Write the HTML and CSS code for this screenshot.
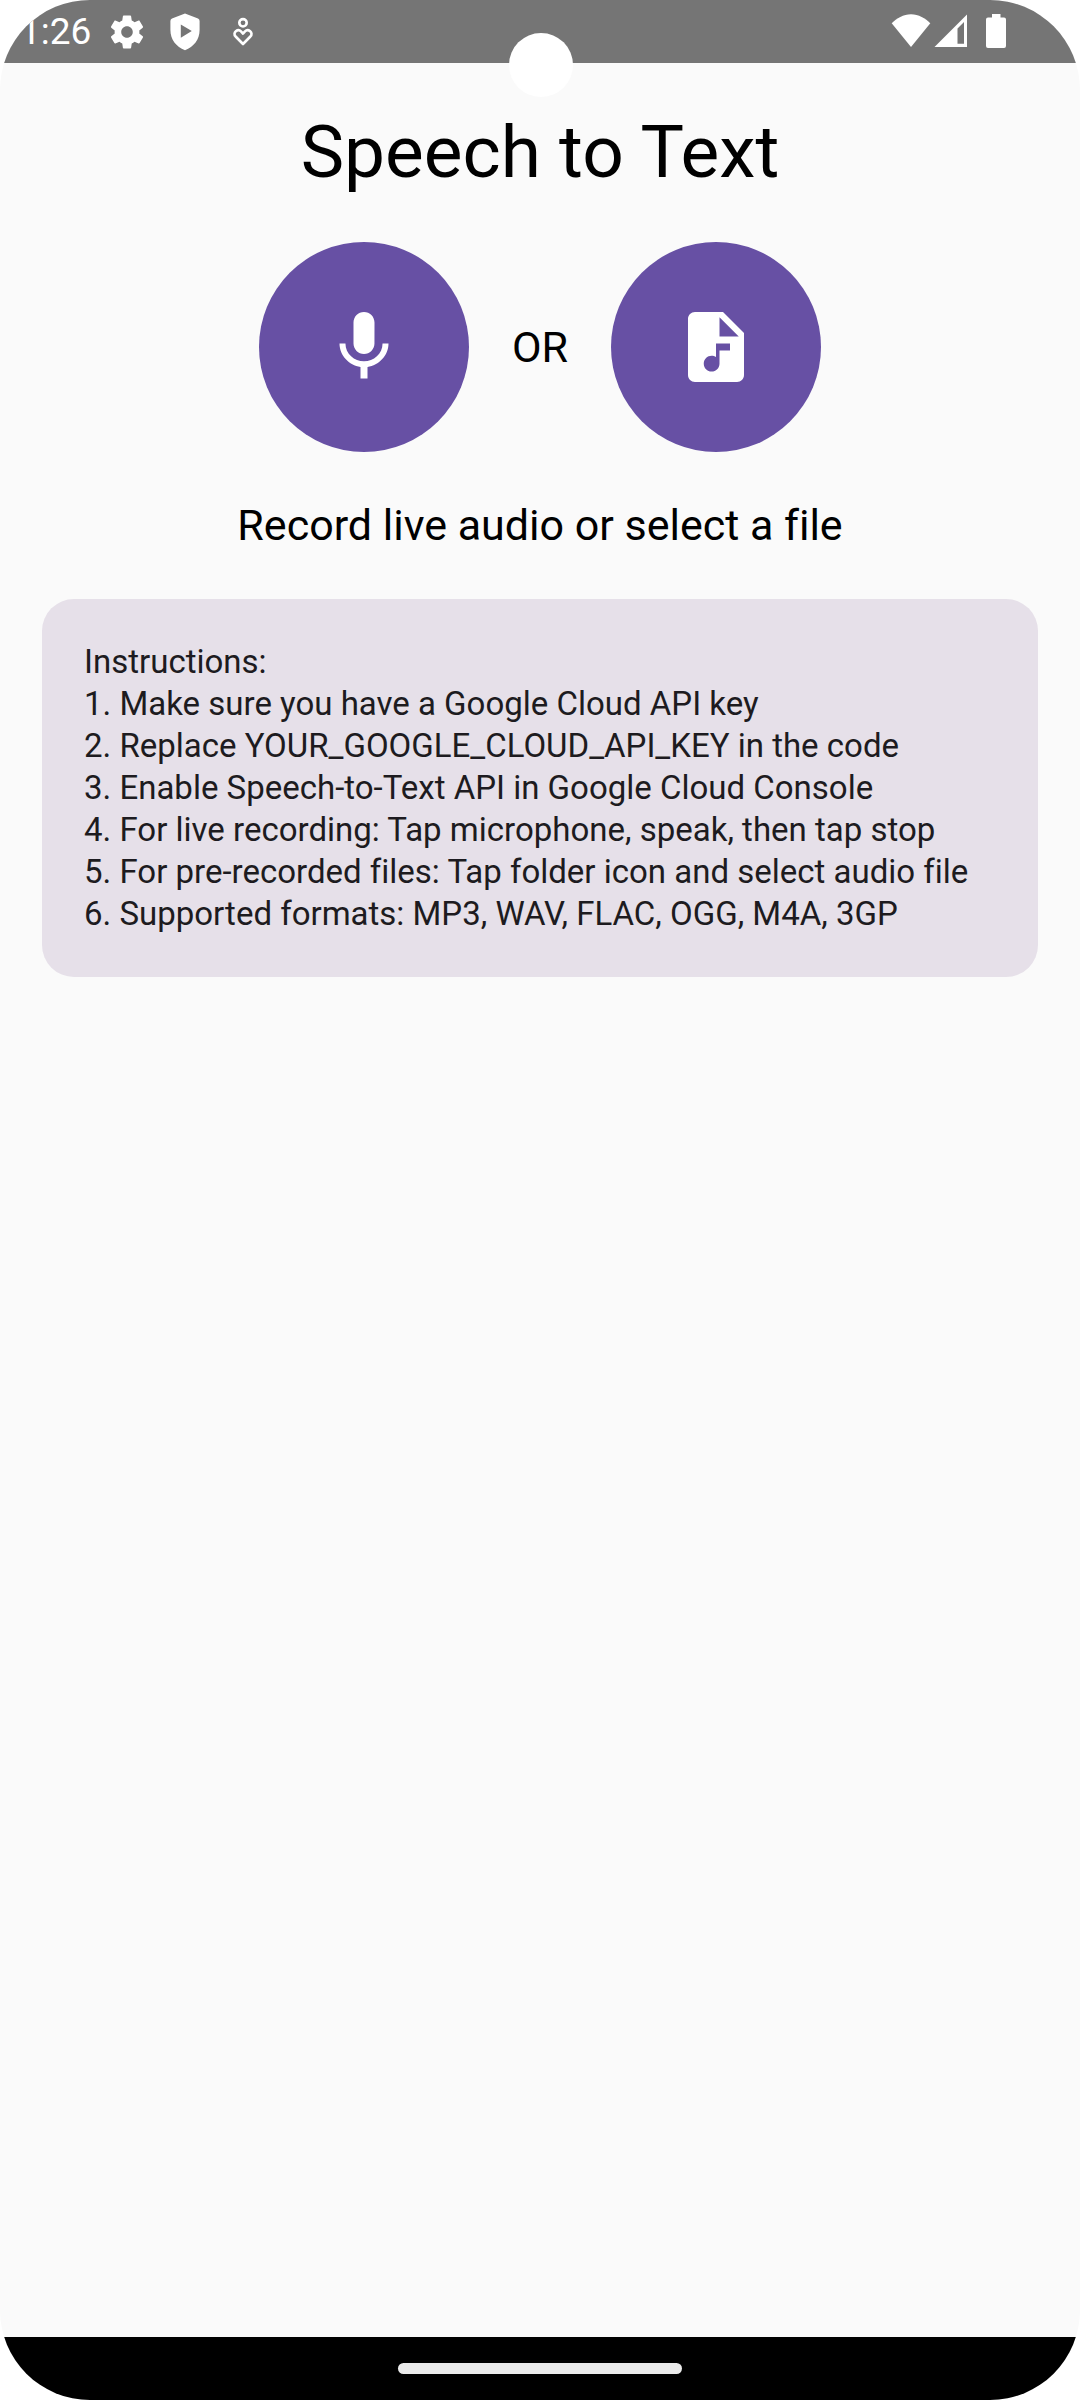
FILE: index.html
```html
<!DOCTYPE html>
<html lang="en">
<head>
  <meta charset="utf-8">
  <meta name="viewport" content="width=device-width, initial-scale=1">
  <title>Speech to Text</title>
  <link rel="stylesheet" href="styles.css">
</head>
<body>
  <div class="screen">
    <header class="status-bar">
      <div class="status-group">
        <time class="clock">1:26</time>
        <div class="notifications">
          <svg class="status-icon" viewBox="0 0 40 40" aria-hidden="true">
            <path transform="translate(.2 .2) scale(1.65)" d="M19.43 12.98c.04-.32.07-.64.07-.98s-.03-.66-.07-.98l2.11-1.65c.19-.15.24-.42.12-.64l-2-3.46c-.12-.22-.39-.3-.61-.22l-2.49 1c-.52-.4-1.08-.73-1.69-.98l-.38-2.65C14.46 2.18 14.25 2 14 2h-4c-.25 0-.46.18-.49.42l-.38 2.65c-.61.25-1.17.59-1.69.98l-2.49-1c-.23-.09-.49 0-.61.22l-2 3.46c-.13.22-.07.49.12.64l2.11 1.65c-.04.32-.07.65-.07.98s.03.66.07.98l-2.11 1.65c-.19.15-.24.42-.12.64l2 3.46c.12.22.39.3.61.22l2.49-1c.52.4 1.08.73 1.69.98l.38 2.65c.03.24.24.42.49.42h4c.25 0 .46-.18.49-.42l.38-2.65c.61-.25 1.17-.59 1.69-.98l2.49 1c.23.09.49 0 .61-.22l2-3.46c.12-.22.07-.49-.12-.64l-2.11-1.65zM12 15.5c-1.93 0-3.5-1.57-3.5-3.5s1.57-3.5 3.5-3.5 3.5 1.57 3.5 3.5-1.57 3.5-3.5 3.5z"/>
          </svg>
          <svg class="status-icon" viewBox="0 0 40 40" aria-hidden="true">
            <path fill-rule="evenodd" d="M20 1.600 33 6.600Q34.600 7.300 34.600 9V18C34.600 27.500 28.800 34.800 20 38.200 11.200 34.800 5.400 27.500 5.400 18V9Q5.400 7.300 7 6.600ZM15.800 12.500V25.700L26.800 19.100Z"/>
          </svg>
          <svg class="status-icon" viewBox="0 0 40 40" aria-hidden="true">
            <g fill="none" stroke="#fff" stroke-width="2.600">
              <circle cx="20" cy="10.800" r="3.700"/>
              <path stroke-linejoin="round" d="M20 32 12.600 24.500C9 20.500 15 16.400 18 19.400L20 21.600 22 19.400C25 16.400 31 20.500 27.400 24.500Z"/>
            </g>
          </svg>
        </div>
      </div>
      <div class="status-group status-group-end">
        <svg class="status-icon" viewBox="0 0 40 40" aria-hidden="true">
          <path d="M20 35 .7 11.200C5.500 6.400 12.500 2.200 20 2.200S34.500 6.400 39.300 11.200Z"/>
        </svg>
        <svg class="status-icon" viewBox="0 0 40 40" aria-hidden="true">
          <path fill-rule="evenodd" d="M3.500 35 36 2.500V35ZM26.500 16.500V31.700H33V9.900Z"/>
        </svg>
        <svg class="battery" viewBox="0 0 22 40" aria-hidden="true">
          <path d="M7 2h8.500v3.500H19Q21 5.500 21 7.500V34Q21 36 19 36H3Q1 36 1 34V7.500Q1 5.500 3 5.500H7Z"/>
        </svg>
      </div>
      <span class="camera"></span>
    </header>

    <main class="content">
      <h1 class="title">Speech to Text</h1>
      <div class="actions">
        <button class="action-button" type="button" aria-label="Record live audio">
          <svg class="action-icon" viewBox="0 0 24 24" aria-hidden="true">
            <path d="M12 14c1.660 0 2.990-1.340 2.990-3L15 5c0-1.660-1.340-3-3-3S9 3.340 9 5v6c0 1.660 1.340 3 3 3zM17.300 11c0 3-2.540 5.100-5.300 5.100S6.700 14 6.700 11H5c0 3.410 2.720 6.230 6 6.720V21h2v-3.280c3.280-.48 6-3.300 6-6.720h-1.700z"/>
          </svg>
        </button>
        <span class="body-text">OR</span>
        <button class="action-button" type="button" aria-label="Select an audio file">
          <svg class="action-icon" viewBox="0 0 24 24" aria-hidden="true">
            <path fill-rule="evenodd" d="M14 2H6C4.900 2 4 2.900 4 4V20C4 21.100 4.900 22 6 22H18C19.100 22 20 21.100 20 20V8ZM16 13H13V16.750C13 17.990 11.990 19 10.750 19S8.500 17.990 8.500 16.750 9.510 14.500 10.750 14.500C11.210 14.500 11.640 14.640 12 14.880V11H16ZM13 9V3.500L18.500 9Z"/>
          </svg>
        </button>
      </div>
      <p class="body-text">Record live audio or select a file</p>
      <section class="card">
        <p class="card-line">Instructions:</p>
        <p class="card-line">1. Make sure you have a Google Cloud API key</p>
        <p class="card-line">2. Replace YOUR_GOOGLE_CLOUD_API_KEY in the code</p>
        <p class="card-line">3. Enable Speech-to-Text API in Google Cloud Console</p>
        <p class="card-line">4. For live recording: Tap microphone, speak, then tap stop</p>
        <p class="card-line">5. For pre-recorded files: Tap folder icon and select audio file</p>
        <p class="card-line">6. Supported formats: MP3, WAV, FLAC, OGG, M4A, 3GP</p>
      </section>
    </main>

    <footer class="nav-bar"><span class="nav-handle"></span></footer>
  </div>
</body>
</html>
```
FILE: styles.css
```css
* {
  box-sizing: border-box;
}

body {
  margin: 0;
  background: #fff;
  font-family: Roboto, "Liberation Sans", sans-serif;
  font-variant-ligatures: none;
}

.screen {
  display: flex;
  flex-direction: column;
  min-height: 100vh;
  overflow: hidden;
  border-radius: 90px;
  background: #fafafa;
}

.status-bar {
  position: relative;
  display: flex;
  justify-content: space-between;
  height: 63px;
  padding: 0 73px 0 20px;
  background: #757575;
  color: #fff;
}

.status-group {
  display: flex;
  align-items: center;
  gap: 16px;
}

.status-group-end {
  gap: 0;
}

.notifications {
  display: flex;
  gap: 18px;
}

.clock {
  font-size: 37px;
  line-height: 63px;
}

.status-icon {
  width: 40px;
  height: 40px;
  fill: #fff;
}

.battery {
  width: 22px;
  height: 40px;
  margin-left: 14px;
  fill: #fff;
}

.camera {
  position: absolute;
  top: 33px;
  left: 50%;
  width: 64px;
  height: 64px;
  margin-left: -31px;
  border-radius: 50%;
  background: #fff;
}

.content {
  display: flex;
  flex: 1;
  flex-direction: column;
  align-items: center;
  gap: 42px;
  padding: 42px;
}

.title {
  margin: 0;
  color: #000;
  font-size: 73px;
  font-weight: 400;
  line-height: 95px;
}

.actions {
  display: flex;
  align-items: center;
  gap: 43px;
}

.action-button {
  display: flex;
  align-items: center;
  justify-content: center;
  width: 210px;
  height: 210px;
  padding: 0;
  border: 0;
  border-radius: 50%;
  background: #6750a4;
}

.action-icon {
  width: 84px;
  height: 84px;
  fill: #fff;
}

.body-text {
  margin: 0;
  color: #000;
  font-size: 43px;
  line-height: 63px;
}

.card {
  align-self: stretch;
  padding: 42px;
  border-radius: 32px;
  background: #e6e0e9;
  color: #1d1b20;
}

.card-line {
  margin: 0;
  font-size: 33px;
  line-height: 42px;
}

.nav-bar {
  display: flex;
  align-items: center;
  justify-content: center;
  height: 63px;
  background: #000;
}

.nav-handle {
  width: 284px;
  height: 11px;
  border-radius: 6px;
  background: #ebebeb;
}
```
